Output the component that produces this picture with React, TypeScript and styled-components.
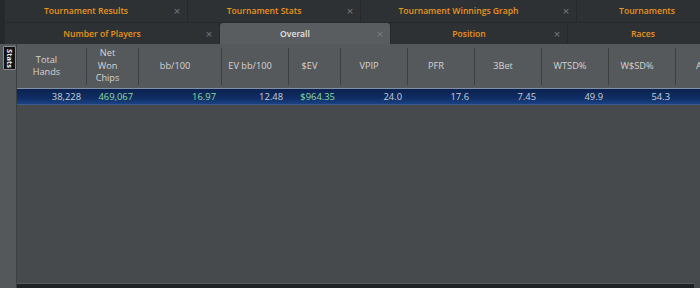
import React from "react";
import styled, { createGlobalStyle } from "styled-components";

const Global = createGlobalStyle`
  html, body { margin: 0; padding: 0; background: #26282b; }
  body { width: 700px; height: 288px; overflow: hidden; font-family: "Open Sans", "Noto Sans", sans-serif; }
`;

const Page = styled.div`
  width: 700px;
  height: 288px;
  display: flex;
  flex-direction: column;
  overflow: hidden;
  background: #26282b;
`;

const TabRow = styled.div<{ $top?: boolean }>`
  display: flex;
  height: ${(p) => (p.$top ? "22px" : "21px")};
  padding-left: 5px;
  margin-bottom: ${(p) => (p.$top ? "1px" : "0")};
  gap: 1px;
  flex-shrink: 0;
  overflow: hidden;
`;

const Tab = styled.div<{ $w: number; $active?: boolean }>`
  flex: 0 0 ${(p) => p.$w}px;
  display: flex;
  align-items: center;
  background: ${(p) => (p.$active ? "#5a5d60" : "#2e3134")};
  border-radius: ${(p) => (p.$active ? "3px 3px 0 0" : "0")};
  box-sizing: border-box;
`;

const TabLabel = styled.span<{ $active?: boolean }>`
  flex: 1;
  text-align: center;
  font-size: 8.6px;
  font-weight: 600;
  color: ${(p) => (p.$active ? "#e4e4e4" : "#e8941c")};
  white-space: nowrap;
`;

const TabClose = styled.span`
  flex: 0 0 20px;
  text-align: center;
  font-size: 9px;
  color: #7b7e81;
  font-family: "DejaVu Sans", sans-serif;
`;

const Content = styled.div`
  flex: 1;
  display: flex;
  min-height: 0;
`;

const SideStrip = styled.div`
  flex: 0 0 13px;
  background: #55585b;
  border-right: 1px solid #3c3f42;
  padding: 2px 0 0 3px;
`;

const SideTab = styled.div`
  width: 13px;
  height: 24px;
  background: #121314;
  border: 1px solid #8a8c8e;
  border-radius: 1px;
  box-sizing: border-box;
  display: flex;
  align-items: center;
  justify-content: center;
  writing-mode: vertical-rl;
  font-size: 7.5px;
  font-weight: 700;
  color: #f0f0f0;
  line-height: 1;
`;

const Main = styled.div`
  flex: 1;
  display: flex;
  flex-direction: column;
  background: #474a4d;
  min-width: 0;
  overflow: hidden;
`;

const cols = "70px 52px 83px 67px 52px 67px 67px 67px 67px 67px 67px";

const HeaderRow = styled.div`
  display: grid;
  grid-template-columns: ${cols};
  height: 44px;
  background: #56595c;
  flex-shrink: 0;
`;

const HeaderCell = styled.div`
  position: relative;
  display: flex;
  align-items: center;
  justify-content: center;
  padding: 0 15px 0 4px;
  font-size: 9.2px;
  line-height: 12.5px;
  color: #d4d4d4;
  text-align: center;
  white-space: pre-line;
  overflow: hidden;
  &::after {
    content: "";
    position: absolute;
    right: 0;
    top: 4px;
    bottom: 3px;
    width: 1px;
    background: #3c3f42;
  }
`;

const DataRow = styled.div`
  display: grid;
  grid-template-columns: ${cols};
  height: 17px;
  box-sizing: border-box;
  background: linear-gradient(#0b2250, #0f2d63 60%, #1a4283);
  border-top: 1px solid #8090a8;
  border-bottom: 1px solid #3a5c8e;
  flex-shrink: 0;
`;

const DataCell = styled.div<{ $tone?: "green" | "plain" }>`
  display: flex;
  align-items: center;
  justify-content: flex-end;
  padding-right: 6px;
  font-size: 9.4px;
  color: ${(p) => (p.$tone === "green" ? "#8fdc9c" : "#c9d0da")};
  white-space: nowrap;
`;

const Body = styled.div`
  flex: 1;
`;

const BottomBar = styled.div`
  height: 4px;
  background: #1f2224;
  border-top: 1px solid #5a5d60;
  margin-right: 6px;
  flex-shrink: 0;
`;

const topTabs = [
  { label: "Tournament Results", w: 182 },
  { label: "Tournament Stats", w: 172 },
  { label: "Tournament Winnings Graph", w: 215 },
  { label: "Tournaments", w: 160 },
];

const subTabs = [
  { label: "Number of Players", w: 214 },
  { label: "Overall", w: 170, active: true },
  { label: "Position", w: 176 },
  { label: "Races", w: 170 },
];

const headers = [
  "Total\nHands",
  "Net\nWon\nChips",
  "bb/100",
  "EV bb/100",
  "$EV",
  "VPIP",
  "PFR",
  "3Bet",
  "WTSD%",
  "W$SD%",
  "AFq",
];

const values: { v: string; tone?: "green" | "plain" }[] = [
  { v: "38,228" },
  { v: "469,067", tone: "green" },
  { v: "16.97", tone: "green" },
  { v: "12.48" },
  { v: "$964.35", tone: "green" },
  { v: "24.0" },
  { v: "17.6" },
  { v: "7.45" },
  { v: "49.9" },
  { v: "54.3" },
  { v: "" },
];

export default function App() {
  return (
    <Page>
      <Global />
      <TabRow $top>
        {topTabs.map((t) => (
          <Tab key={t.label} $w={t.w}>
            <TabLabel>{t.label}</TabLabel>
            <TabClose>×</TabClose>
          </Tab>
        ))}
      </TabRow>
      <TabRow>
        {subTabs.map((t) => (
          <Tab key={t.label} $w={t.w} $active={t.active}>
            <TabLabel $active={t.active}>{t.label}</TabLabel>
            <TabClose>×</TabClose>
          </Tab>
        ))}
      </TabRow>
      <Content>
        <SideStrip>
          <SideTab>Stats</SideTab>
        </SideStrip>
        <Main>
          <HeaderRow>
            {headers.map((h) => (
              <HeaderCell key={h}>{h}</HeaderCell>
            ))}
          </HeaderRow>
          <DataRow>
            {values.map((c, i) => (
              <DataCell key={i} $tone={c.tone}>
                {c.v}
              </DataCell>
            ))}
          </DataRow>
          <Body />
          <BottomBar />
        </Main>
      </Content>
    </Page>
  );
}
